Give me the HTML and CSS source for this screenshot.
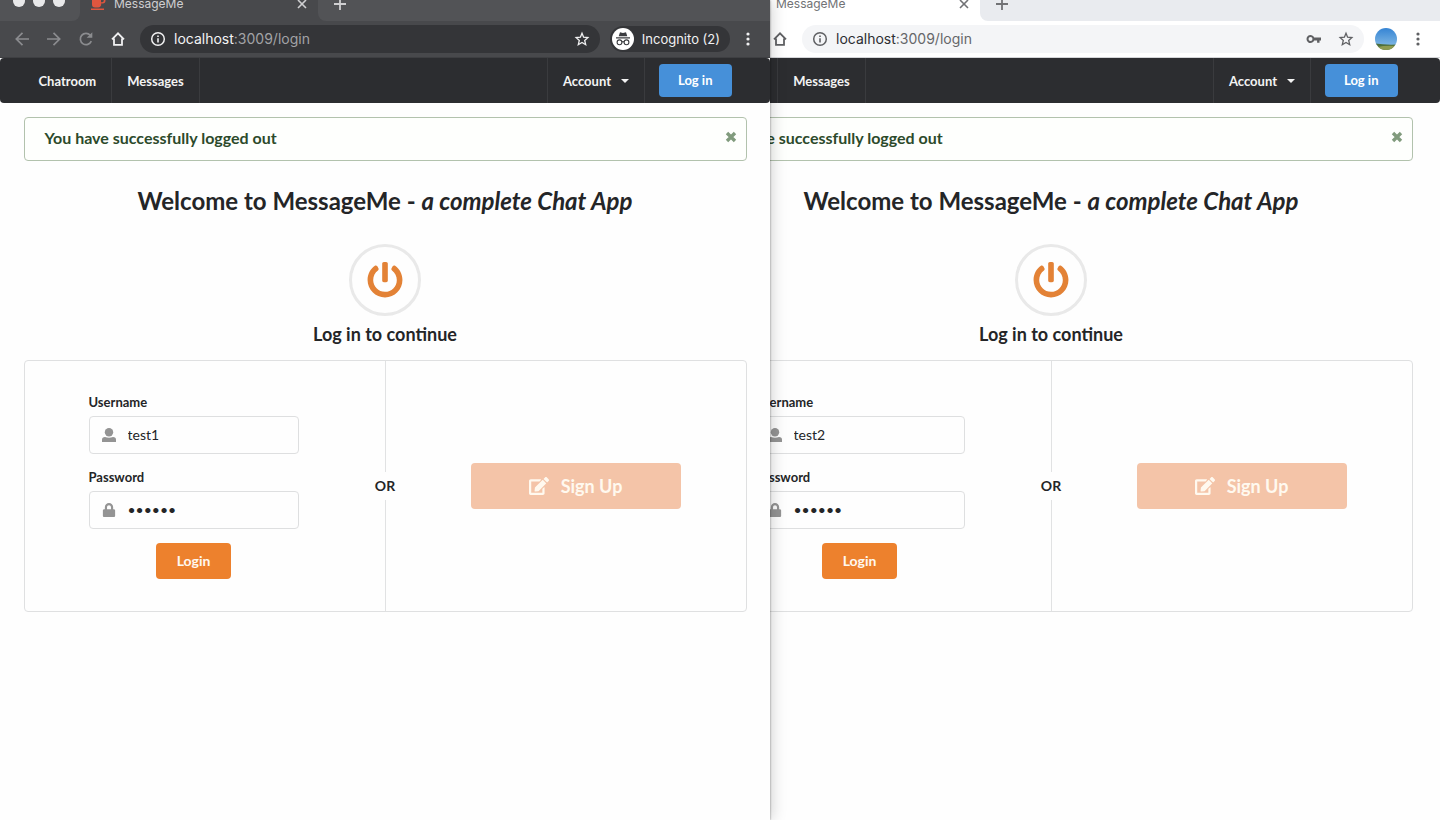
FILE: index.html
```html
<!DOCTYPE html>
<html lang="en">
<head>
<meta charset="utf-8">
<title>MessageMe</title>
<link rel="stylesheet" href="styles.css">
</head>
<body>
<svg class="sprite" aria-hidden="true">
  <symbol id="i-close" viewBox="0 0 12 12"><path d="M2 2l8 8M10 2l-8 8" fill="none" stroke="currentColor" stroke-width="1.6"/></symbol>
  <symbol id="i-plus" viewBox="0 0 14 14"><path d="M7 1v12M1 7h12" fill="none" stroke="currentColor" stroke-width="1.8"/></symbol>
  <symbol id="i-cup" viewBox="0 0 16 16"><path d="M2 0h9v1.500h1.500a2.700 2.700 0 0 1 0 6H11A3 3 0 0 1 8 11.500H5A3 3 0 0 1 2 8.500zM11 3v3.200h1.200a1.600 1.600 0 0 0 0-3.200zM1 12.500h13v1.600H1z" fill="currentColor"/></symbol>
  <symbol id="i-back" viewBox="0 0 16 16"><path d="M15 8H2.500M8.500 1.800L2.300 8l6.200 6.200" fill="none" stroke="currentColor" stroke-width="1.7"/></symbol>
  <symbol id="i-forward" viewBox="0 0 16 16"><path d="M1 8h12.500M7.500 1.800L13.700 8l-6.200 6.200" fill="none" stroke="currentColor" stroke-width="1.7"/></symbol>
  <symbol id="i-reload" viewBox="0 0 16 16"><path d="M13.300 10.200A5.700 5.700 0 1 1 12.300 4.200" fill="none" stroke="currentColor" stroke-width="1.7"/><path d="M14.300 1.200v5.600H8.700z" fill="currentColor"/></symbol>
  <symbol id="i-home" viewBox="0 0 16 16"><path d="M2 8.300L8 2.300l6 6M4 7.500v6.300h8V7.500" fill="none" stroke="currentColor" stroke-width="1.8"/></symbol>
  <symbol id="i-info" viewBox="0 0 16 16"><circle cx="8" cy="8" r="6.300" fill="none" stroke="currentColor" stroke-width="1.500"/><path d="M7.200 7.200h1.600v4.200H7.200zM7.200 4.500h1.600v1.600H7.200z" fill="currentColor"/></symbol>
  <symbol id="i-star" viewBox="0 0 16 16"><path d="M8 2.200l1.600 4 4.300.4-3.200 2.900 1 4.200L8 11.500l-3.700 2.200 1-4.200-3.200-2.900 4.300-.4z" fill="none" stroke="currentColor" stroke-width="1.300"/></symbol>
  <symbol id="i-key" viewBox="0 0 16 16"><path d="M8.200 6.500H15v3h-1.500v2.300h-2.400V9.500H8.200A4 4 0 1 1 8.200 6.500zM4.500 6a2 2 0 1 0 0 4 2 2 0 0 0 0-4z" fill="currentColor" fill-rule="evenodd"/></symbol>
  <symbol id="i-dots" viewBox="0 0 4 16"><circle cx="2" cy="3" r="1.600" fill="currentColor"/><circle cx="2" cy="8" r="1.600" fill="currentColor"/><circle cx="2" cy="13" r="1.600" fill="currentColor"/></symbol>
  <symbol id="i-spy" viewBox="0 0 22 22"><circle cx="11" cy="11" r="11" fill="#fff"/><path d="M8 4.300l3 .7 3-.7 1.300 4H6.700zM4 9.300h14v1.200H4z" fill="#3b3c40"/><g fill="none" stroke="#3b3c40" stroke-width="1.100"><circle cx="7.500" cy="14.300" r="2.400"/><circle cx="14.500" cy="14.300" r="2.400"/><path d="M9.900 14q1.100-.8 2.200 0"/></g></symbol>
  <symbol id="i-avatar" viewBox="0 0 22 22"><clipPath id="disc"><circle cx="11" cy="11" r="11"/></clipPath><linearGradient id="sky" x1="0" y1="0" x2="0" y2="1"><stop offset="0" stop-color="#3584d4"/><stop offset="1" stop-color="#7bb4e2"/></linearGradient><g clip-path="url(#disc)"><path d="M0 0h22v17H0z" fill="url(#sky)"/><path d="M0 15.500q10 1.500 22 1V22H0z" fill="#4d6f3c"/><path d="M2 19q9-2 20-1v4H2z" fill="#8e9b50"/></g></symbol>
  <symbol id="i-caret" viewBox="0 0 8 4"><path d="M0 0h8L4 4z" fill="currentColor"/></symbol>
  <symbol id="i-times" viewBox="0 0 12 12"><path d="M2 2l8 8M10 2l-8 8" fill="none" stroke="currentColor" stroke-width="3.400"/></symbol>
  <symbol id="i-power" viewBox="0 0 512 512"><path d="M400 54.100c63 45 104 118.600 104 201.900 0 136.800-110.800 247.700-247.500 248C120 504.300 8.200 393 8 256.400 7.900 173.100 48.900 99.300 111.800 54.200c11.700-8.300 28-4.800 35 7.700L162.600 90c5.900 10.500 3.100 23.800-6.600 31-41.500 30.800-68 79.600-68 134.900-.1 92.300 74.500 168.100 168 168.100 91.600 0 168.600-74.200 168-169.100-.3-51.800-24.700-101.800-68.100-134-9.700-7.200-12.400-20.500-6.500-30.900l15.800-28.100c7-12.400 23.200-16.100 34.800-7.800zM296 264V24c0-13.300-10.700-24-24-24h-32c-13.300 0-24 10.700-24 24v240c0 13.300 10.700 24 24 24h32c13.300 0 24-10.700 24-24z" fill="currentColor"/></symbol>
  <symbol id="i-user" viewBox="0 0 14 14"><circle cx="7" cy="4.200" r="4.200" fill="currentColor"/><path d="M0 14v-2.200Q0 9 3 9q4 1.300 8 0 3 0 3 2.800V14z" fill="currentColor"/></symbol>
  <symbol id="i-lock" viewBox="0 0 448 512"><path d="M400 224h-24v-72C376 68.200 307.800 0 224 0S72 68.200 72 152v72H48c-26.500 0-48 21.500-48 48v192c0 26.500 21.500 48 48 48h352c26.500 0 48-21.500 48-48V272c0-26.500-21.500-48-48-48zm-104 0H152v-72c0-39.700 32.300-72 72-72s72 32.300 72 72v72z" fill="currentColor"/></symbol>
  <symbol id="i-edit" viewBox="0 0 576 512"><path d="M402.600 83.200l90.200 90.200c3.800 3.800 3.800 10 0 13.800L274.400 405.600l-92.800 10.300c-12.400 1.400-22.900-9.100-21.500-21.500l10.300-92.800L388.800 83.200c3.800-3.800 10-3.800 13.800 0zm162-22.900l-48.800-48.800c-15.200-15.200-39.900-15.200-55.200 0l-35.400 35.400c-3.800 3.800-3.800 10 0 13.800l90.200 90.200c3.800 3.800 10 3.800 13.800 0l35.400-35.400c15.200-15.300 15.200-40 0-55.200zM384 346.200V448H64V128h229.800c3.200 0 6.200-1.300 8.500-3.500l40-40c7.600-7.600 2.200-20.500-8.500-20.500H48C21.500 64 0 85.500 0 112v352c0 26.500 21.500 48 48 48h352c26.500 0 48-21.500 48-48V306.200c0-10.700-12.900-16-20.500-8.500l-40 40c-2.200 2.300-3.500 5.300-3.500 8.500z" fill="currentColor"/></symbol>
</svg>

<main class="desktop">
  <section class="window window-light" aria-label="Browser window">
    <div class="tabstrip">
      <div class="lights"><span class="light"></span><span class="light"></span><span class="light"></span></div>
      <div class="tab">
        <svg class="ic16 cup"><use href="#i-cup"/></svg><span class="tab-title">MessageMe</span>
        <button class="bare" aria-label="Close tab"><svg class="ic12"><use href="#i-close"/></svg></button>
      </div>
      <div class="strip-rest"><button class="bare" aria-label="New tab"><svg class="ic14"><use href="#i-plus"/></svg></button></div>
    </div>
    <div class="toolbar">
      <button class="bare dim" aria-label="Back"><svg class="ic16"><use href="#i-back"/></svg></button>
      <button class="bare dim" aria-label="Forward"><svg class="ic16"><use href="#i-forward"/></svg></button>
      <button class="bare dim" aria-label="Reload"><svg class="ic16"><use href="#i-reload"/></svg></button>
      <button class="bare" aria-label="Home"><svg class="ic16"><use href="#i-home"/></svg></button>
      <div class="omnibox">
        <svg class="ic16"><use href="#i-info"/></svg>
        <span class="url"><span class="host">localhost</span>:3009/login</span>
        <button class="bare" aria-label="Saved passwords"><svg class="ic16"><use href="#i-key"/></svg></button>
        <button class="bare" aria-label="Bookmark"><svg class="ic16"><use href="#i-star"/></svg></button>
      </div>
      <button class="bare profile" aria-label="Profile"><svg class="ic22"><use href="#i-avatar"/></svg></button>
      <button class="bare" aria-label="Menu"><svg class="dots"><use href="#i-dots"/></svg></button>
    </div>
    <div class="page">
      <nav class="nav"><div class="container nav-items">
        <a class="nav-link" href="#">Chatroom</a>
        <a class="nav-link" href="#">Messages</a>
        <button class="nav-link account">Account <svg class="caret"><use href="#i-caret"/></svg></button>
        <div class="nav-action"><a class="btn-blue" href="#">Log in</a></div>
      </div></nav>
      <div class="container">
        <div class="message"><span>You have successfully logged out</span><button class="bare dismiss" aria-label="Dismiss"><svg class="ic12"><use href="#i-times"/></svg></button></div>
        <h1 class="title">Welcome to MessageMe - <i>a complete Chat App</i></h1>
        <div class="power"><svg class="ic36"><use href="#i-power"/></svg></div>
        <h2 class="subtitle">Log in to continue</h2>
        <div class="segment">
          <form class="login">
            <label class="label" for="user2">Username</label>
            <div class="field"><svg class="ic14"><use href="#i-user"/></svg><input class="input" id="user2" type="text" value="test2"></div>
            <label class="label" for="pass2">Password</label>
            <div class="field"><svg class="ic14"><use href="#i-lock"/></svg><input class="input" id="pass2" type="password" value="secret"></div>
            <button class="btn-login" type="button">Login</button>
          </form>
          <div class="divider">OR</div>
          <div class="signup"><a class="btn-signup" href="#"><svg class="ic20"><use href="#i-edit"/></svg>Sign Up</a></div>
        </div>
      </div>
    </div>
  </section>

  <section class="window window-dark" aria-label="Incognito browser window">
    <div class="tabstrip">
      <div class="lights"><span class="light"></span><span class="light"></span><span class="light"></span></div>
      <div class="tab">
        <svg class="ic16 cup"><use href="#i-cup"/></svg><span class="tab-title">MessageMe</span>
        <button class="bare" aria-label="Close tab"><svg class="ic12"><use href="#i-close"/></svg></button>
      </div>
      <div class="strip-rest"><button class="bare" aria-label="New tab"><svg class="ic14"><use href="#i-plus"/></svg></button></div>
    </div>
    <div class="toolbar">
      <button class="bare dim" aria-label="Back"><svg class="ic16"><use href="#i-back"/></svg></button>
      <button class="bare dim" aria-label="Forward"><svg class="ic16"><use href="#i-forward"/></svg></button>
      <button class="bare dim" aria-label="Reload"><svg class="ic16"><use href="#i-reload"/></svg></button>
      <button class="bare" aria-label="Home"><svg class="ic16"><use href="#i-home"/></svg></button>
      <div class="omnibox">
        <svg class="ic16"><use href="#i-info"/></svg>
        <span class="url"><span class="host">localhost</span>:3009/login</span>
        <button class="bare" aria-label="Bookmark"><svg class="ic16"><use href="#i-star"/></svg></button>
      </div>
      <button class="incognito"><svg class="ic22"><use href="#i-spy"/></svg>Incognito (2)</button>
      <button class="bare" aria-label="Menu"><svg class="dots"><use href="#i-dots"/></svg></button>
    </div>
    <div class="page">
      <nav class="nav"><div class="container nav-items">
        <a class="nav-link" href="#">Chatroom</a>
        <a class="nav-link" href="#">Messages</a>
        <button class="nav-link account">Account <svg class="caret"><use href="#i-caret"/></svg></button>
        <div class="nav-action"><a class="btn-blue" href="#">Log in</a></div>
      </div></nav>
      <div class="container">
        <div class="message"><span>You have successfully logged out</span><button class="bare dismiss" aria-label="Dismiss"><svg class="ic12"><use href="#i-times"/></svg></button></div>
        <h1 class="title">Welcome to MessageMe - <i>a complete Chat App</i></h1>
        <div class="power"><svg class="ic36"><use href="#i-power"/></svg></div>
        <h2 class="subtitle">Log in to continue</h2>
        <div class="segment">
          <form class="login">
            <label class="label" for="user1">Username</label>
            <div class="field"><svg class="ic14"><use href="#i-user"/></svg><input class="input" id="user1" type="text" value="test1"></div>
            <label class="label" for="pass1">Password</label>
            <div class="field"><svg class="ic14"><use href="#i-lock"/></svg><input class="input" id="pass1" type="password" value="secret"></div>
            <button class="btn-login" type="button">Login</button>
          </form>
          <div class="divider">OR</div>
          <div class="signup"><a class="btn-signup" href="#"><svg class="ic20"><use href="#i-edit"/></svg>Sign Up</a></div>
        </div>
      </div>
    </div>
  </section>
</main>
</body>
</html>
```

FILE: styles.css
```css
* { box-sizing: border-box; }
body { margin: 0; font: 14px/18px Lato, "Liberation Sans", sans-serif; color: #242527; background: #fefefe; }
button, input { font: inherit; color: inherit; }
button { cursor: pointer; }
a { color: inherit; text-decoration: none; }
svg { display: block; flex: none; }
.sprite { position: absolute; width: 0; height: 0; }
.ic12 { width: 12px; height: 12px; }
.ic14 { width: 14px; height: 14px; }
.ic16 { width: 16px; height: 16px; }
.ic20 { width: 20px; height: 18px; }
.ic22 { width: 22px; height: 22px; }
.ic36 { width: 36px; height: 36px; }
.dots { width: 4px; height: 16px; }
.bare { display: flex; padding: 0; border: 0; background: none; }

/* Two overlapping windows on the desktop */
.desktop { position: relative; min-height: 100vh; overflow: hidden; }
.window { position: absolute; top: 0; bottom: 0; background: #fefefe; }
.window-dark { left: 0; width: calc(50% + 50px); box-shadow: 0 0 2px rgba(0,0,0,.45), 2px 0 14px rgba(0,0,0,.18); }
.window-light { left: calc(50% - 58px); right: 0; }

/* Browser chrome */
.window-dark { --strip: #525356; --bar: #48494c; --pill: #343538; --ink: #f1f1f2; --tabink: #cfcfd1; --dim: #8b8c8f; --url: #a2a3a6; --line: #3e3f42; }
.window-light { --strip: #e9ebef; --bar: #fff; --pill: #f4f5f7; --ink: #5f6063; --tabink: #717275; --dim: #999; --url: #66676a; --line: #d4d5d8; }
.tabstrip, .toolbar { font-family: Inter, "Liberation Sans", sans-serif; }
.tabstrip { display: flex; align-items: flex-end; height: 21px; overflow: hidden; background: var(--bar); color: var(--tabink); }
.lights, .tab, .strip-rest { display: flex; align-items: center; height: 34px; }
.lights { gap: 8px; width: 80px; padding: 0 0 6px 13px; background: var(--strip); border-radius: 0 0 8px 0; }
.light { width: 12px; height: 12px; border-radius: 50%; background: #e9e9ea; }
.tab { gap: 8px; width: 238px; padding: 0 10px; font-size: 12px; background: var(--bar); }
.tab-title { flex: 1; }
.cup { color: #e0563f; }
.strip-rest { flex: 1; padding-left: 15px; background: var(--strip); border-radius: 0 0 0 8px; }
.toolbar { display: flex; align-items: center; gap: 16px; height: 37px; padding: 0 20px 0 14px; background: var(--bar); color: var(--ink); border-bottom: 1px solid var(--line); }
.dim { color: var(--dim); }
.omnibox { display: flex; align-items: center; gap: 8px; flex: 1; min-width: 0; height: 28px; margin-left: -2px; padding: 0 10px; border-radius: 14px; background: var(--pill); }
.window-light .omnibox { gap: 16px; }
.window-light .url { margin-left: -8px; }
.url { flex: 1; font-size: 14px; color: var(--url); }
.host { color: #f3f3f4; }
.window-light .host { color: #2d2e31; }
.profile { margin: 0 3px 0 -5px; }
.incognito { display: flex; align-items: center; gap: 8px; height: 26px; margin-left: -6px; padding: 0 10px 0 2px; border: 0; border-radius: 13px; font-size: 13px; background: var(--pill); }

/* Navigation */
.container { width: 100%; max-width: 723px; margin: 0 auto; }
.nav { border-radius: 4px; background: #2c2d30; color: #f3f3f3; }
.nav-items { display: flex; height: 45px; }
.nav-link { display: flex; align-items: center; padding: 0 15px; border: 0; border-right: 1px solid #3a3b3e; background: none; font-size: 13px; font-weight: 700; }
.account { gap: 10px; margin-left: auto; border-left: 1px solid #3a3b3e; }
.caret { width: 8px; height: 4px; }
.nav-action { display: flex; align-items: center; padding: 0 15px 0 14px; }
.btn-blue { padding: 8px 19px; border-radius: 4px; font-size: 13px; line-height: 17px; font-weight: 700; color: #fff; background: #4690d9; }

/* Page content */
.message { display: flex; align-items: center; justify-content: space-between; height: 44px; margin-top: 14px; padding: 0 9px 2px 20px; border: 1px solid #b2c2ad; border-radius: 4px; background: #fefffd; color: #2c4a2b; font-size: 16px; font-weight: 700; }
.dismiss { color: #819b7d; margin-bottom: 2px; }
.title { margin: 24px 0 27px; font-size: 24px; line-height: 32px; text-align: center; }
.power { display: flex; align-items: center; justify-content: center; width: 72px; height: 72px; margin: 0 auto; border: 3px solid #e9e9e9; border-radius: 50%; color: #e38236; }
.subtitle { margin: 6px 0 14px; font-size: 18px; line-height: 24px; font-weight: 700; text-align: center; }
.segment { display: grid; grid-template-columns: minmax(0, 1fr) 1px minmax(0, 1fr); height: 252px; border: 1px solid #dfe0e1; border-radius: 4px; }
.login { display: flex; flex-direction: column; padding: 32px 86px 0 64px; }
.label { margin-bottom: 5px; font-size: 13px; font-weight: 700; }
.field { display: flex; align-items: center; gap: 12px; height: 38px; margin-bottom: 14px; padding-left: 12px; border: 1px solid #dedfe0; border-radius: 4px; color: #949494; }
.input { flex: 1; min-width: 0; height: 36px; padding: 0 0 1px; border: 0; outline: 0; background: none; color: #242527; }
.btn-login { align-self: center; height: 36px; padding: 0 21px; border: 0; border-radius: 4px; background: #ed812d; color: #fff8ef; font-weight: 700; }
.divider { display: flex; flex-direction: column; align-items: center; gap: 5px; font-weight: 700; white-space: nowrap; }
.divider::before, .divider::after { content: ""; flex: 1; width: 1px; background: #e1e2e3; }
.signup { display: flex; align-items: center; padding: 0 65px 0 85px; }
.btn-signup { display: flex; flex: 1; align-items: center; justify-content: center; gap: 12px; height: 46px; border-radius: 4px; background: #f4c4a8; color: #fff9ef; font-size: 18px; font-weight: 700; }
```
